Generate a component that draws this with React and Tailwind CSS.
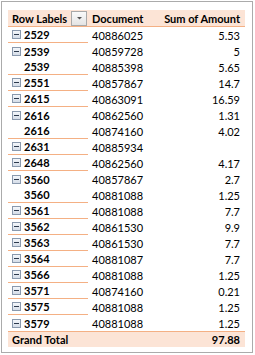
const rows = [
  { label: '2529', doc: '40886025', amt: '5.53', icon: true, end: true },
  { label: '2539', doc: '40859728', amt: '5', icon: true },
  { label: '2539', doc: '40885398', amt: '5.65', end: true },
  { label: '2551', doc: '40857867', amt: '14.7', icon: true, end: true },
  { label: '2615', doc: '40863091', amt: '16.59', icon: true, end: true },
  { label: '2616', doc: '40862560', amt: '1.31', icon: true },
  { label: '2616', doc: '40874160', amt: '4.02', end: true },
  { label: '2631', doc: '40885934', amt: '', icon: true, end: true },
  { label: '2648', doc: '40862560', amt: '4.17', icon: true, end: true },
  { label: '3560', doc: '40857867', amt: '2.7', icon: true },
  { label: '3560', doc: '40881088', amt: '1.25', end: true },
  { label: '3561', doc: '40881088', amt: '7.7', icon: true, end: true },
  { label: '3562', doc: '40861530', amt: '9.9', icon: true, end: true },
  { label: '3563', doc: '40861530', amt: '7.7', icon: true, end: true },
  { label: '3564', doc: '40881087', amt: '7.7', icon: true, end: true },
  { label: '3566', doc: '40881088', amt: '1.25', icon: true, end: true },
  { label: '3571', doc: '40874160', amt: '0.21', icon: true, end: true },
  { label: '3575', doc: '40881088', amt: '1.25', icon: true, end: true },
  { label: '3579', doc: '40881088', amt: '1.25', icon: true },
]

function Collapse() {
  return (
    <span className="flex h-[9px] w-[9px] items-center justify-center border border-[#8a99ad] bg-gradient-to-b from-[#f4f7fb] to-[#d5dde8]">
      <span className="h-px w-[5px] bg-[#2d3a4d]" />
    </span>
  )
}

function FilterButton() {
  return (
    <span className="flex h-[15px] w-[16px] items-center justify-center border border-[#a9a9a9] bg-gradient-to-b from-[#fafafa] to-[#e4e4e4]">
      <svg width="7" height="4" viewBox="0 0 7 4">
        <path d="M1 1h5L3.5 3.5z" fill="#555" />
      </svg>
    </span>
  )
}

export default function App() {
  return (
    <div className="h-[355px] w-[255px] bg-white pl-px pt-px" style={{ fontFamily: 'Lato, "Liberation Sans", sans-serif' }}>
      <div className="h-[352px] w-[252px] border border-[#ababab] pl-[6px] pt-[8px] text-[11px] leading-none text-black">
        <div className="w-[237px]">
          <div className="flex h-[17px] items-center border-b border-[#f4b084] bg-[#fce4d6] font-bold">
            <div className="flex h-full w-[80px] items-center justify-between pl-[4px] pr-px">
              <span>Row Labels</span>
              <FilterButton />
            </div>
            <div className="w-[73px] pl-[4px]">Document</div>
            <div className="flex-1 pr-[5px] text-right">Sum of Amount</div>
          </div>

          {rows.map((r, i) => (
            <div key={i} className="flex h-[16px] items-center">
              <div className={`flex h-full w-[80px] items-center gap-[3px] pl-[4px] font-bold ${r.end ? 'border-b border-[#f4b084]' : ''}`}>
                {r.icon ? <Collapse /> : <span className="w-[9px]" />}
                <span>{r.label}</span>
              </div>
              <div className="w-[73px] pl-[4px]">{r.doc}</div>
              <div className="flex-1 pr-[5px] text-right">{r.amt}</div>
            </div>
          ))}

          <div className="flex h-[16px] items-center border-t border-[#f4b084] bg-[#fce4d6] font-bold">
            <div className="w-[153px] pl-[4px]">Grand Total</div>
            <div className="flex-1 pr-[5px] text-right">97.88</div>
          </div>
        </div>
      </div>
    </div>
  )
}
